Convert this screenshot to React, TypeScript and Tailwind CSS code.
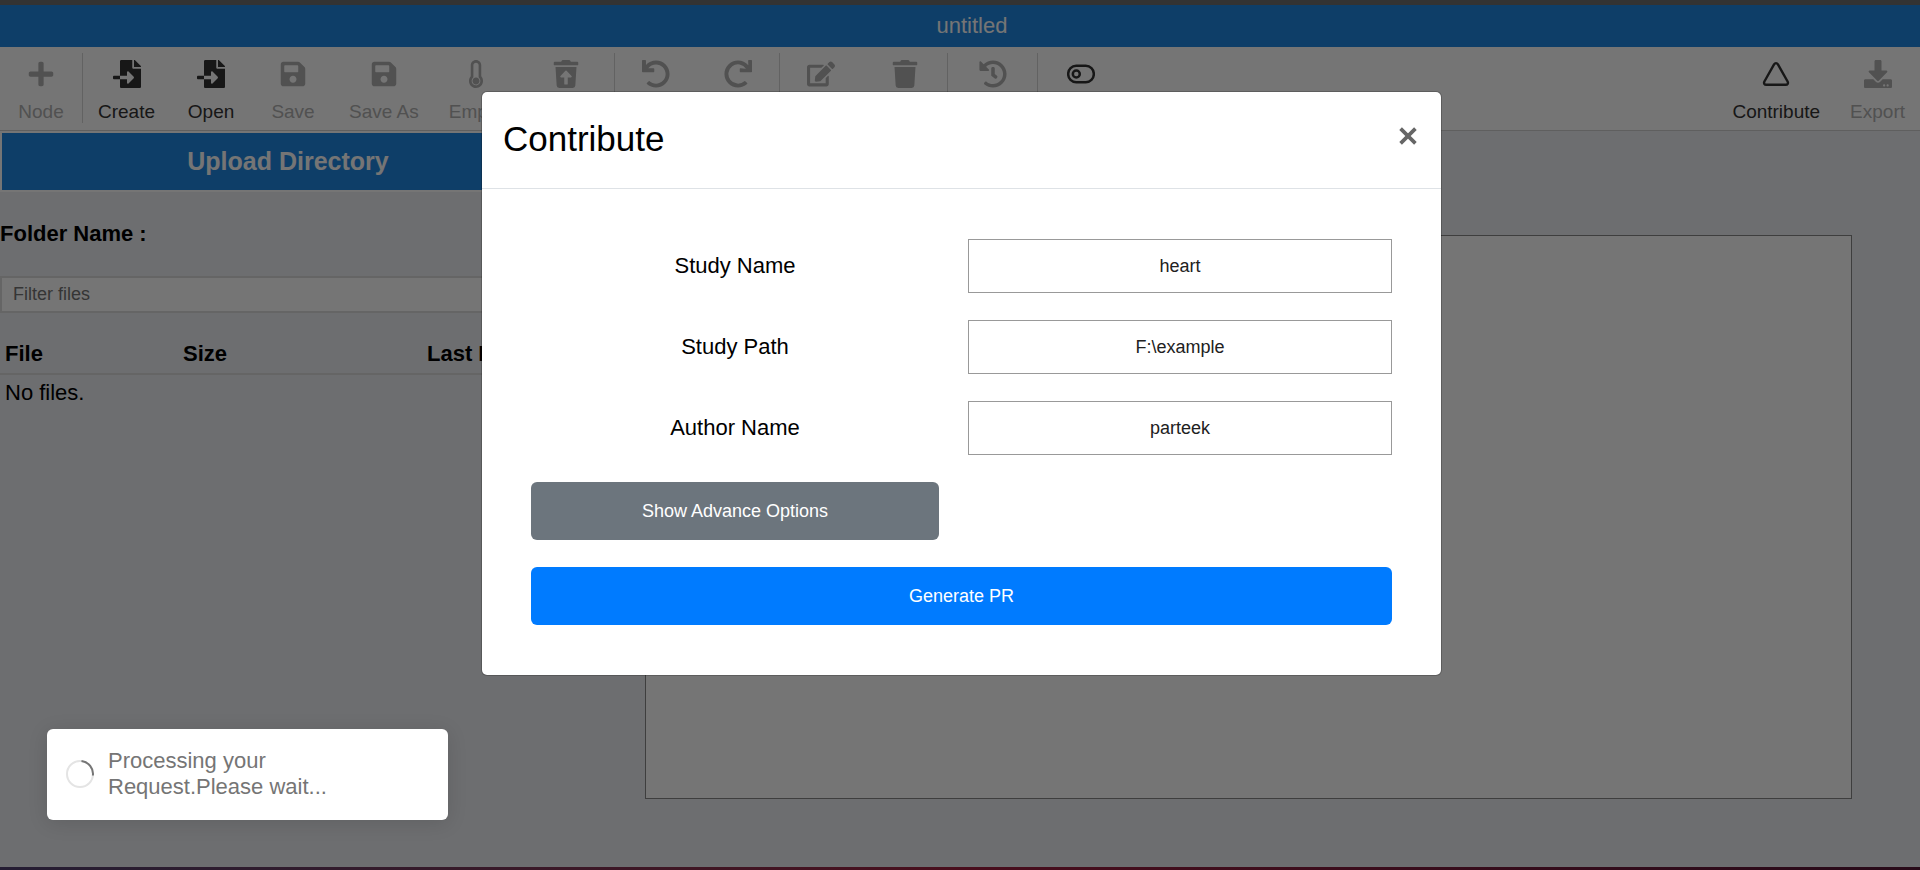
import type { ReactNode } from "react";
import type { IconType } from "react-icons";
import {
  FaPlus, FaFileImport, FaSave, FaThermometerEmpty, FaTrashRestore, FaUndo, FaRedo,
  FaEdit, FaTrash, FaHistory, FaDownload,
} from "react-icons/fa";

const fa = (Icon: IconType) => <Icon size={28} aria-hidden="true" />;

function ToggleIcon() {
  return (
    <svg viewBox="0 0 28 28" className="size-7" fill="none" stroke="currentColor" strokeWidth="2.5" aria-hidden="true">
      <rect x="1.2" y="5.7" width="25.6" height="16.600" rx="8" />
      <circle cx="9.3" cy="14" r="3.5" />
    </svg>
  );
}

function TriangleIcon() {
  return (
    <svg viewBox="0 0 28 28" className="size-7" fill="none" stroke="currentColor" strokeWidth="2.4" strokeLinejoin="round" aria-hidden="true">
      <path d="M12.200 4.200C13 2.700 15 2.700 15.800 4.200L25.600 21.500C26.500 23.200 25.600 24.800 23.700 24.800H4.300C2.400 24.800 1.500 23.200 2.400 21.500Z" />
    </svg>
  );
}

function CloseIcon() {
  return (
    <svg viewBox="0 0 18 18" className="size-[18px]" stroke="currentColor" strokeWidth="3.700" aria-hidden="true">
      <path d="M1.600 1.600L16.400 16.400M16.400 1.600L1.600 16.400" />
    </svg>
  );
}

function Spinner() {
  return (
    <svg viewBox="0 0 28 28" className="size-7 shrink-0" fill="none" strokeWidth="2" aria-hidden="true">
      <circle cx="14" cy="14" r="13" stroke="#e4e4e4" />
      <path d="M15.500 1.100A13 13 0 0 1 26.900 15.500" stroke="#757575" />
    </svg>
  );
}

function Tool({ label, icon, enabled = false }: { label: string; icon: ReactNode; enabled?: boolean }) {
  return (
    <button
      type="button"
      disabled={!enabled}
      className={`flex min-w-[82px] shrink-0 flex-col items-center gap-3 px-[15px] pt-[7px] text-[19px] leading-6 ${enabled ? "text-[#333]" : "text-[#b0b0b0]"}`}
    >
      {icon}
      <span>{label}</span>
    </button>
  );
}

function Divider() {
  return <div className="h-[70px] w-px shrink-0 bg-[#d6d6d6]" />;
}

function Toolbar() {
  return (
    <div className="flex items-start border-b border-[#d0d0d0] bg-white py-1.5">
      <Tool label="Node" icon={fa(FaPlus)} />
      <Divider />
      <Tool label="Create" icon={fa(FaFileImport)} enabled />
      <Tool label="Open" icon={fa(FaFileImport)} enabled />
      <Tool label="Save" icon={fa(FaSave)} />
      <Tool label="Save As" icon={fa(FaSave)} />
      <Tool label="Empty" icon={fa(FaThermometerEmpty)} />
      <Tool label="Restore" icon={fa(FaTrashRestore)} />
      <Divider />
      <Tool label="Undo" icon={fa(FaUndo)} />
      <Tool label="Redo" icon={fa(FaRedo)} />
      <Divider />
      <Tool label="Edit" icon={fa(FaEdit)} />
      <Tool label="Delete" icon={fa(FaTrash)} />
      <Divider />
      <Tool label="History" icon={fa(FaHistory)} />
      <Divider />
      <Tool label="Toggle" icon={<ToggleIcon />} enabled />
      <div className="ml-auto flex">
        <Tool label="Contribute" icon={<TriangleIcon />} enabled />
        <Tool label="Export" icon={fa(FaDownload)} />
      </div>
    </div>
  );
}

function Field({ id, label, value }: { id: string; label: string; value: string }) {
  return (
    <div className="grid grid-cols-[408fr_424fr] items-center gap-x-[29px]">
      <label htmlFor={id} className="text-center text-[22px] leading-8">{label}</label>
      <input
        id={id}
        defaultValue={value}
        className="h-[54px] w-full border border-[#999] bg-white text-center text-lg text-[#212121]"
      />
    </div>
  );
}

export default function App() {
  return (
    <div className="relative flex min-h-screen flex-col bg-[#edf0f3] font-['Liberation_Sans',Arial,sans-serif] text-black">
      <div className="h-[5px] bg-[#707070]" />
      <header className="flex h-[42px] items-center justify-center bg-[#2088e2] pb-0.5 pl-6 text-[22px] text-white">untitled</header>
      <Toolbar />
      <main className="flex flex-1">
        <section className="w-[30%]">
          <button type="button" className="h-[61px] w-full border-2 border-white bg-[#2088e2] text-[25px] font-bold text-white">
            Upload Directory
          </button>
          <h2 className="mt-[26px] text-[22px] leading-8 font-bold">Folder Name :</h2>
          <input
            aria-label="Filter files"
            placeholder="Filter files"
            className="mt-[26px] h-[37px] w-full border-2 border-[#dcdcdc] bg-white px-[11px] text-lg placeholder:text-[#757575]"
          />
          <table className="mt-[25px] w-full table-fixed text-left text-[22px] leading-8">
            <thead className="border-b-2 border-[#dcdcdc]">
              <tr>
                <th className="w-[178px] px-[5px] pb-[3px]">File</th>
                <th className="w-[244px] px-[5px] pb-[3px]">Size</th>
                <th className="px-[5px] pb-[3px] whitespace-nowrap">Last Modified</th>
              </tr>
            </thead>
            <tbody>
              <tr><td colSpan={3} className="px-[5px] pt-0.5">No files.</td></tr>
            </tbody>
          </table>
        </section>
        <section className="flex flex-1 pt-[104px] pr-[68px] pb-[68px] pl-[69px]">
          <div className="flex-1 border border-[#888] bg-white" />
        </section>
      </main>
      <div className="h-[3px] bg-gradient-to-r from-[#504070] via-[#a02040] to-[#581838]" />

      <div className="absolute inset-0 bg-black/54 pt-[91px] pl-[3px]">
        <div role="dialog" aria-labelledby="dialog-title" className="mx-auto w-full max-w-[961px] rounded-md border border-black/20 bg-white bg-clip-padding">
          <div className="flex items-start justify-between border-b border-[#dee2e6] pt-[25px] pr-6 pb-[27px] pl-[21px]">
            <h1 id="dialog-title" className="text-[35px] leading-[44px]">Contribute</h1>
            <button type="button" aria-label="Close" className="mt-2.5 text-[#666]"><CloseIcon /></button>
          </div>
          <div className="flex flex-col gap-[27px] px-[49px] py-[50px]">
            <Field id="study" label="Study Name" value="heart" />
            <Field id="path" label="Study Path" value="F:\example" />
            <Field id="author" label="Author Name" value="parteek" />
            <div className="grid grid-cols-[408fr_424fr] gap-x-[29px]">
              <button type="button" className="h-[58px] rounded-md bg-[#6c757d] text-lg text-white">Show Advance Options</button>
            </div>
            <button type="button" className="h-[58px] rounded-md bg-[#007bff] text-lg text-white">Generate PR</button>
          </div>
        </div>
      </div>

      <div role="status" className="absolute bottom-[50px] left-[47px] flex h-[91px] w-[401px] items-center gap-3.5 rounded-md bg-white px-[19px] pb-0.5 text-[22px] leading-[26px] text-[#757575] shadow-[0_3px_20px_rgba(0,0,0,0.12)]">
        <Spinner />
        <p>Processing your<br />Request.Please wait...</p>
      </div>
    </div>
  );
}
